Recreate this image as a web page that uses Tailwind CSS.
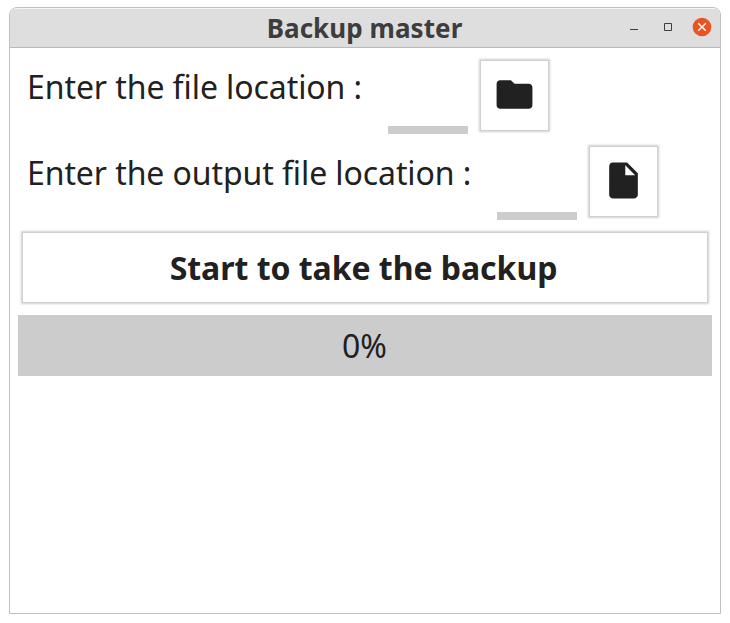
<!DOCTYPE html>
<html lang="en">
<head>
<meta charset="utf-8">
<title>Backup master</title>
<script src="https://cdn.jsdelivr.net/npm/@tailwindcss/browser@4"></script>
</head>
<body class="h-[623px] w-[730px] overflow-hidden bg-white pt-[7px] pl-[9px] font-['Noto_Sans',sans-serif] text-[#212121]">
<main class="flex h-[607px] w-[712px] flex-col overflow-hidden rounded-t-lg border border-[#c0c0c0] bg-white">
  <header class="grid h-10 shrink-0 grid-cols-[1fr_auto_1fr] items-center border-t border-b border-t-[#f5f5f5] border-b-[#b9b9b9] bg-[#dedede]">
    <span></span>
    <h1 class="pr-px text-[26px] leading-[38px] font-bold tracking-[0.06px] whitespace-nowrap text-[#3d3d3d]">Backup master</h1>
    <div class="flex items-center justify-end pr-[8px] pb-[2px]">
      <svg class="mr-[22px] h-5 w-3" viewBox="0 0 12 20"><path d="M2 12.5h8" stroke="#3d3d3d"/></svg>
      <svg class="mr-[18px] h-5 w-3" viewBox="0 0 12 20"><path d="M2.5 6.5h7v7h-7z" fill="none" stroke="#3d3d3d"/></svg>
      <svg class="h-5 w-5" viewBox="0 0 20 20"><circle cx="10" cy="10" r="9.300" fill="#e95420"/><path d="M6.200 6.200l7.600 7.600M13.800 6.200l-7.600 7.600" stroke="#fff" stroke-width="1.400"/></svg>
    </div>
  </header>
  <section class="flex flex-1 flex-col pt-[13px] pr-2 pl-2">
    <div class="flex h-[86px] items-start">
      <label class="w-[370px] shrink-0 pl-[9px] text-[32px] leading-[52px] tracking-[-0.08px] whitespace-nowrap">Enter the file location :</label>
      <div class="mt-[65px] h-2 w-20 shrink-0 bg-[#ccc]"></div>
      <button class="ml-[13px] flex h-[69px] w-[67px] shrink-0 items-center justify-center bg-white pr-px pb-[3px] shadow-[0_0_0_1px_#d0d0d0,0_0_2px_2px_#cfcfcf]">
        <svg class="h-[43px] w-[43px]" viewBox="0 0 24 24" fill="#212121"><path d="M10 4H4c-1.100 0-1.990.9-1.990 2L2 18c0 1.100.9 2 2 2h16c1.100 0 2-.9 2-2V8c0-1.100-.9-2-2-2h-8l-2-2z"/></svg>
      </button>
    </div>
    <div class="flex h-[86px] items-start">
      <label class="w-[479px] shrink-0 pl-[9px] text-[32px] leading-[52px] tracking-[-0.09px] whitespace-nowrap">Enter the output file location :</label>
      <div class="mt-[65px] h-2 w-20 shrink-0 bg-[#ccc]"></div>
      <button class="ml-[13px] flex h-[69px] w-[67px] shrink-0 items-center justify-center bg-white pr-px pb-[3px] shadow-[0_0_0_1px_#d0d0d0,0_0_2px_2px_#cfcfcf]">
        <svg class="h-[43px] w-[43px]" viewBox="0 0 24 24" fill="#212121"><path d="M6 2c-1.100 0-1.990.9-1.990 2L4 20c0 1.100.89 2 1.990 2H18c1.100 0 2-.9 2-2V8l-6-6H6zm7 7V3.500L18.500 9H13z"/></svg>
      </button>
    </div>
    <button class="ml-[5px] h-[69px] w-[684px] shrink-0 bg-white pr-[3px] text-[32px] leading-[69px] font-bold tracking-[-0.04px] shadow-[0_0_0_1px_#d0d0d0,0_0_2px_2px_#cfcfcf]">Start to take the backup</button>
    <div class="mt-[13px] h-[61px] w-[694px] shrink-0 bg-[#ccc] pr-px text-center text-[32px] leading-[61px]">0%</div>
  </section>
</main>
</body>
</html>
